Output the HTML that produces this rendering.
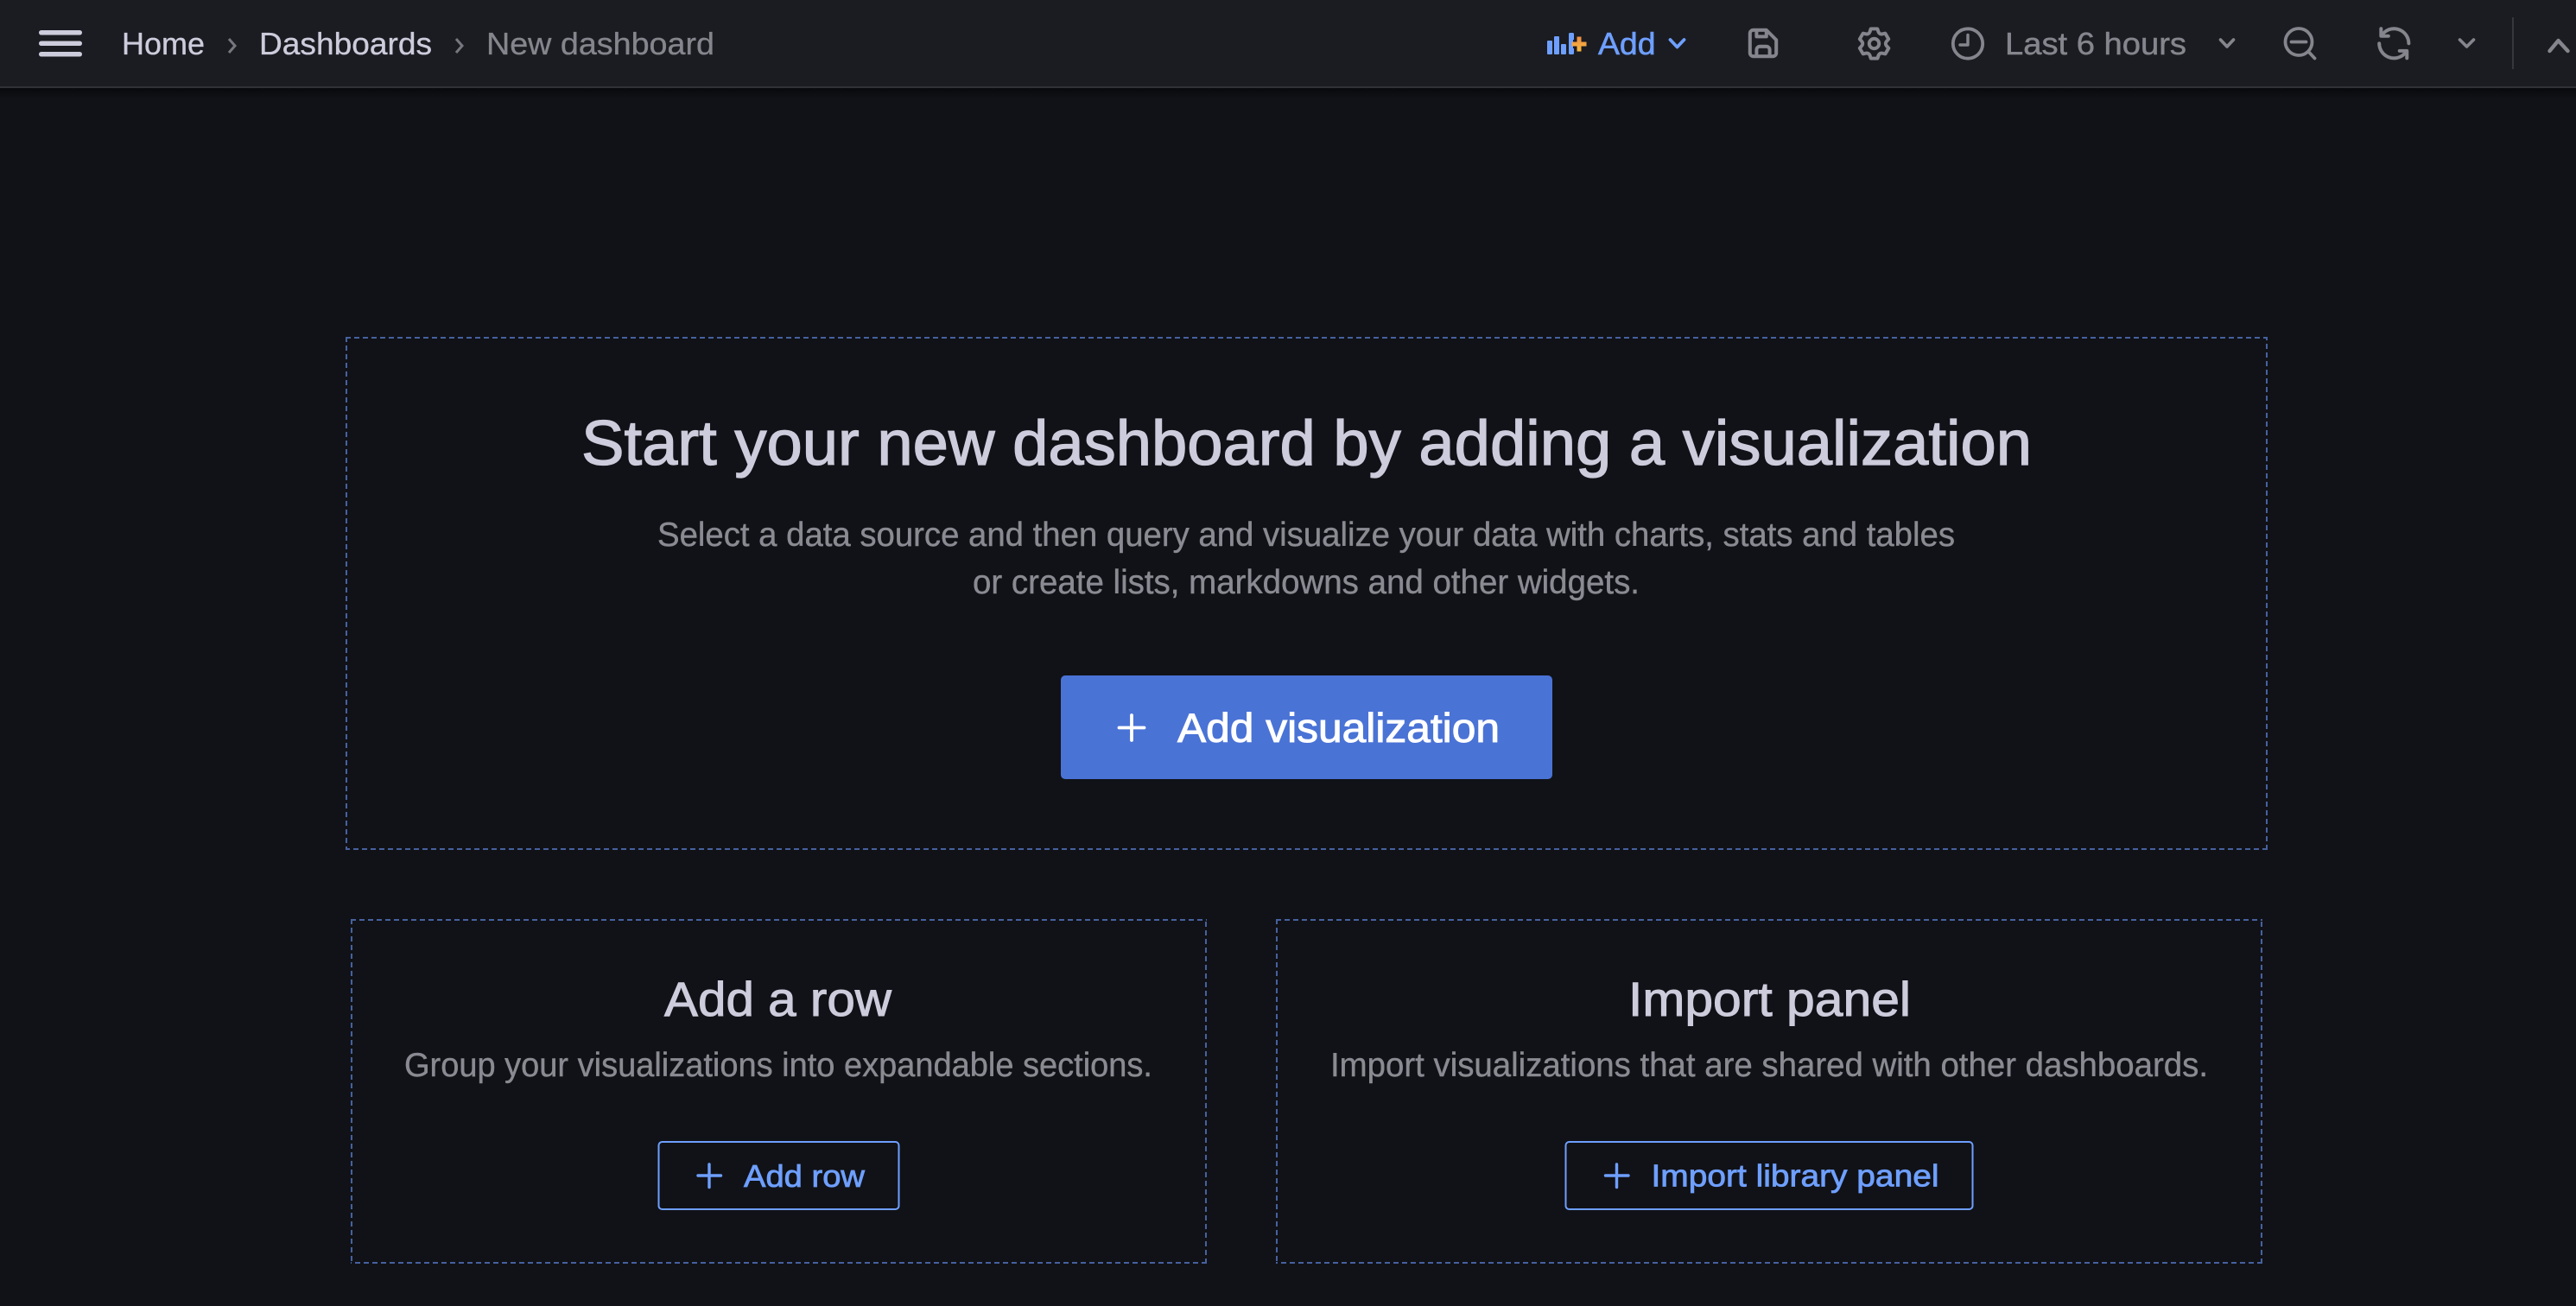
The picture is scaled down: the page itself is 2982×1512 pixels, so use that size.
<!DOCTYPE html>
<html lang="en">
<head>
<meta charset="utf-8">
<title>New dashboard</title>
<style>
html,body{margin:0;padding:0;width:2982px;height:1512px;overflow:hidden;background:#111217}
svg{display:block}
text{font-family:"Liberation Sans",sans-serif}
</style>
</head>
<body>
<svg xmlns="http://www.w3.org/2000/svg" width="2982" height="1512" viewBox="0 0 2982 1512">
<defs>
<linearGradient id="sh" x1="0" y1="0" x2="0" y2="1"><stop offset="0" stop-color="#08090c"/><stop offset="1" stop-color="#111217"/></linearGradient>
<linearGradient id="or" gradientUnits="userSpaceOnUse" x1="0" y1="42" x2="0" y2="60"><stop offset="0" stop-color="#ee8c45"/><stop offset="1" stop-color="#f6bb3e"/></linearGradient>
</defs>
<rect width="2982" height="1512" fill="#111217"/>
<rect width="2982" height="100" fill="#1b1c21"/>
<rect y="100" width="2982" height="2" fill="#303137"/>
<rect y="102" width="2982" height="12" fill="url(#sh)"/>

<!-- hamburger -->
<g fill="#ccccdc">
<rect x="45" y="35" width="50" height="5.5" rx="2.7"/>
<rect x="45" y="47.5" width="50" height="5.5" rx="2.7"/>
<rect x="45" y="60" width="50" height="5.5" rx="2.7"/>
</g>

<!-- breadcrumbs -->
<text x="141" y="63" font-size="36.500" fill="#ccccdc" stroke="#ccccdc" stroke-width=".35" textLength="96" lengthAdjust="spacingAndGlyphs">Home</text>
<path d="M265 45l7 8-7 8" fill="none" stroke="#77777f" stroke-width="3"/>
<text x="300" y="63" font-size="36.500" fill="#ccccdc" stroke="#ccccdc" stroke-width=".35" textLength="200" lengthAdjust="spacingAndGlyphs">Dashboards</text>
<path d="M528 45l7 8-7 8" fill="none" stroke="#77777f" stroke-width="3"/>
<text x="563" y="63" font-size="36.500" fill="#85858d" stroke="#85858d" stroke-width=".35" textLength="264" lengthAdjust="spacingAndGlyphs">New dashboard</text>

<!-- Add -->
<g fill="#6e9fff">
<rect x="1791" y="47" width="6" height="16" rx="1"/>
<rect x="1799" y="42" width="6" height="21" rx="1"/>
<rect x="1807" y="51" width="6" height="12" rx="1"/>
<rect x="1816" y="38" width="6" height="25" rx="1.500"/>
</g>
<path d="M1828 44v14M1821 51h14" stroke="#1b1c21" stroke-width="10" fill="none"/>
<path d="M1825.500 42.500h5v6h6v5h-6v6h-5v-6h-6v-5h6z" fill="url(#or)"/>
<text x="1850" y="63" font-size="36.500" fill="#6e9fff" stroke="#6e9fff" stroke-width=".6" textLength="66.500" lengthAdjust="spacingAndGlyphs">Add</text>
<path d="M1933.500 46l8 8.500 8-8.500" fill="none" stroke="#6e9fff" stroke-width="3.800" stroke-linecap="round" stroke-linejoin="round"/>

<!-- save -->
<g transform="translate(2018.200 27.200) scale(1.9)" fill="#85858d" stroke="#85858d" stroke-width=".12">
<path d="M20.71,9.29l-6-6a1,1,0,0,0-.32-.21A1.09,1.09,0,0,0,14,3H6A3,3,0,0,0,3,6V18a3,3,0,0,0,3,3H18a3,3,0,0,0,3-3V10A1,1,0,0,0,20.71,9.29ZM9,5h4V7H9Zm6,14H9V16a1,1,0,0,1,1-1h4a1,1,0,0,1,1,1Zm4-1a1,1,0,0,1-1,1H17V16a3,3,0,0,0-3-3H10a3,3,0,0,0-3,3v3H6a1,1,0,0,1-1-1V6A1,1,0,0,1,6,5H7V8A1,1,0,0,0,8,9h6a1,1,0,0,0,1-1V6.41l4,4Z"/>
</g>
<!-- gear -->
<g transform="translate(2147.400 27.700) scale(1.9)" fill="#85858d" stroke="#85858d" stroke-width=".1">
<path d="M19.9,12.66a1,1,0,0,1,0-1.32L21.18,9.9a1,1,0,0,0,.12-1.17l-2-3.46a1,1,0,0,0-1.07-.48l-1.88.38a1,1,0,0,1-1.15-.66l-.61-1.83A1,1,0,0,0,13.64,2h-4a1,1,0,0,0-1,.68L8.08,4.51a1,1,0,0,1-1.15.66L5,4.79A1,1,0,0,0,4,5.27L2,8.73A1,1,0,0,0,2.1,9.9l1.27,1.44a1,1,0,0,1,0,1.32L2.1,14.1A1,1,0,0,0,2,15.27l2,3.46a1,1,0,0,0,1.07.48l1.88-.38a1,1,0,0,1,1.15.66l.61,1.83a1,1,0,0,0,1,.68h4a1,1,0,0,0,.95-.68l.61-1.83a1,1,0,0,1,1.15-.66l1.88.38a1,1,0,0,0,1.07-.48l2-3.46a1,1,0,0,0-.12-1.17ZM18.41,14l.8.9-1.28,2.22-1.18-.24a3,3,0,0,0-3.45,2L12.92,20H10.36L10,18.86a3,3,0,0,0-3.45-2l-1.18.24L4.07,14.89l.8-.9a3,3,0,0,0,0-4l-.8-.9L5.35,6.89l1.18.24a3,3,0,0,0,3.45-2L10.36,4h2.56l.38,1.14a3,3,0,0,0,3.45,2l1.18-.24,1.28,2.22-.8.9A3,3,0,0,0,18.41,14ZM11.64,8a4,4,0,1,0,4,4A4,4,0,0,0,11.64,8Zm0,6a2,2,0,1,1,2-2A2,2,0,0,1,11.64,14Z"/>
</g>
<!-- clock -->
<circle cx="2278" cy="50.500" r="17.200" fill="none" stroke="#85858d" stroke-width="3.800"/>
<path d="M2278 40.500v11.500h-9" fill="none" stroke="#85858d" stroke-width="3.400" stroke-linecap="round" stroke-linejoin="round"/>
<text x="2321" y="63" font-size="36.500" fill="#85858d" stroke="#85858d" stroke-width=".5" textLength="210" lengthAdjust="spacingAndGlyphs">Last 6 hours</text>
<path d="M2570.500 46l7.500 8 7.500-8" fill="none" stroke="#85858d" stroke-width="3.600" stroke-linecap="round" stroke-linejoin="round"/>

<!-- zoom out -->
<circle cx="2661" cy="48.500" r="15.500" fill="none" stroke="#85858d" stroke-width="3.800"/>
<path d="M2652.500 48.500h17M2672.500 60l7 7.500" fill="none" stroke="#85858d" stroke-width="3.800" stroke-linecap="round"/>
<!-- refresh -->
<g transform="translate(2748.500 27.500) scale(1.9)" fill="#85858d" stroke="#85858d" stroke-width=".1">
<path d="M19.91,15.51H15.38a1,1,0,0,0,0,2h2.4A8,8,0,0,1,4,12a1,1,0,0,0-2,0,10,10,0,0,0,16.88,7.23V21a1,1,0,0,0,2,0V16.500A1,1,0,0,0,19.91,15.51ZM12,2A10,10,0,0,0,5.12,4.77V3a1,1,0,0,0-2,0V7.500a1,1,0,0,0,1,1h4.500a1,1,0,0,0,0-2H6.22A8,8,0,0,1,20,12a1,1,0,0,0,2,0A10,10,0,0,0,12,2Z"/>
</g>
<path d="M2847.500 46l8 8 8-8" fill="none" stroke="#85858d" stroke-width="3.600" stroke-linecap="round" stroke-linejoin="round"/>
<rect x="2908" y="20" width="2" height="60" fill="#36373d"/>
<path d="M2951.500 59l10-12 11 12" fill="none" stroke="#85858d" stroke-width="4.400" stroke-linecap="round" stroke-linejoin="round"/>

<!-- dashed panels -->
<g fill="none" stroke="#46619f" stroke-width="2" stroke-dasharray="6 4">
<path d="M400 391H2625M401 390V984M2625 983H400M2624 984V390"/>
<path d="M406 1065H1397M407 1064V1463M1397 1462H406M1396 1463V1064"/>
<path d="M1477 1065H2619M1478 1064V1463M2619 1462H1477M2618 1463V1064"/>
</g>

<text x="673" y="538" font-size="73" fill="#ccccdc" stroke="#ccccdc" stroke-width="1.300" textLength="1679" lengthAdjust="spacingAndGlyphs">Start your new dashboard by adding a visualization</text>
<text x="761" y="632" font-size="38.500" fill="#8a8a92" stroke="#8a8a92" stroke-width=".4" textLength="1502" lengthAdjust="spacingAndGlyphs">Select a data source and then query and visualize your data with charts, stats and tables</text>
<text x="1126" y="687" font-size="38.500" fill="#8a8a92" stroke="#8a8a92" stroke-width=".4" textLength="772" lengthAdjust="spacingAndGlyphs">or create lists, markdowns and other widgets.</text>

<rect x="1228" y="782" width="569" height="120" rx="5" fill="#4a73d6"/>
<path d="M1310 828v29M1295.500 842.500h29" stroke="#fff" stroke-width="3.800" stroke-linecap="round" fill="none"/>
<text x="1363" y="859" font-size="47.500" fill="#fff" stroke="#fff" stroke-width="1" textLength="373" lengthAdjust="spacingAndGlyphs">Add visualization</text>

<!-- add row -->
<text x="769" y="1176" font-size="55.500" fill="#ccccdc" stroke="#ccccdc" stroke-width="1" textLength="263" lengthAdjust="spacingAndGlyphs">Add a row</text>
<text x="468" y="1246" font-size="38.500" fill="#8a8a92" stroke="#8a8a92" stroke-width=".4" textLength="866" lengthAdjust="spacingAndGlyphs">Group your visualizations into expandable sections.</text>
<rect x="762.500" y="1322" width="278" height="78" rx="4" fill="none" stroke="#6e9fff" stroke-width="2"/>
<path d="M821 1348v26.500M808 1361h26.500" stroke="#6e9fff" stroke-width="3.400" stroke-linecap="round" fill="none"/>
<text x="861" y="1374" font-size="36.500" fill="#6e9fff" stroke="#6e9fff" stroke-width=".8" textLength="140" lengthAdjust="spacingAndGlyphs">Add row</text>

<!-- import panel -->
<text x="1885" y="1176" font-size="55.500" fill="#ccccdc" stroke="#ccccdc" stroke-width="1" textLength="327" lengthAdjust="spacingAndGlyphs">Import panel</text>
<text x="1540" y="1246" font-size="38.500" fill="#8a8a92" stroke="#8a8a92" stroke-width=".4" textLength="1016" lengthAdjust="spacingAndGlyphs">Import visualizations that are shared with other dashboards.</text>
<rect x="1812.500" y="1322" width="471" height="78" rx="4" fill="none" stroke="#6e9fff" stroke-width="2"/>
<path d="M1871.500 1348v26.500M1858.500 1361h26.500" stroke="#6e9fff" stroke-width="3.400" stroke-linecap="round" fill="none"/>
<text x="1911.500" y="1373.500" font-size="36.500" fill="#6e9fff" stroke="#6e9fff" stroke-width=".8" textLength="333" lengthAdjust="spacingAndGlyphs">Import library panel</text>
</svg>
</body>
</html>
